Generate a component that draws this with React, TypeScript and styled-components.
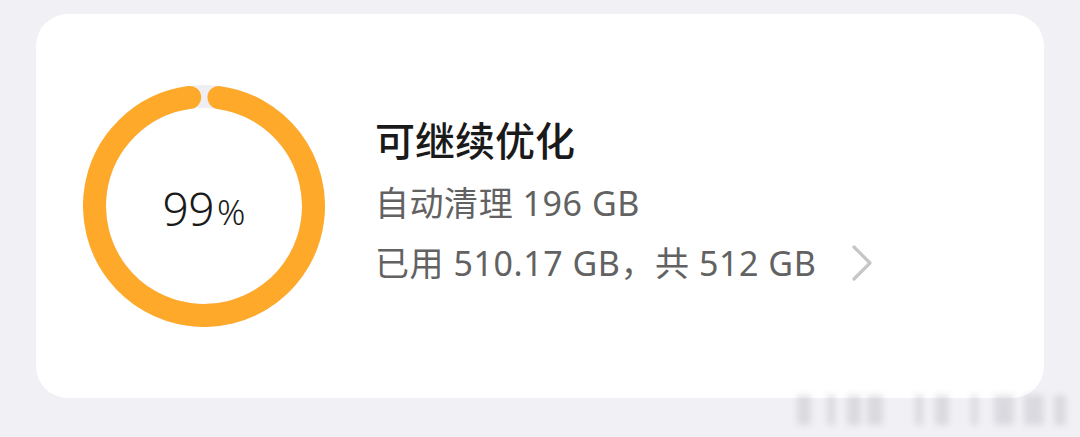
import React from "react";
import styled, { createGlobalStyle } from "styled-components";

const Global = createGlobalStyle`
  html, body {
    margin: 0;
    padding: 0;
    background: #f1f1f5;
  }
  body {
    width: 1080px;
    height: 437px;
    overflow: hidden;
    font-family: "Noto Sans", "Noto Sans CJK SC", sans-serif;
  }
`;

const Page = styled.div`
  position: relative;
  width: 1080px;
  height: 437px;
  padding: 14px 36px 0 36px;
  box-sizing: border-box;
`;

const Card = styled.section`
  height: 384px;
  background: #ffffff;
  border-radius: 32px;
  display: flex;
  align-items: center;
  padding-left: 47px;
  gap: 50px;
`;

const RingWrap = styled.div`
  position: relative;
  width: 242px;
  height: 242px;
  flex: none;
`;

const RingSvg = styled.svg`
  display: block;
`;

const RingLabel = styled.div`
  position: absolute;
  inset: 0;
  display: flex;
  align-items: center;
  justify-content: center;
  padding-top: 4px;
  color: #1a1a1a;
  font-family: "Noto Sans", sans-serif;
`;

const Percent = styled.span`
  font-size: 46px;
  font-weight: 300;
  line-height: 1;
  letter-spacing: -0.5px;
`;

const PercentSign = styled.span`
  font-size: 35px;
  font-weight: 300;
  line-height: 1;
  margin-left: 3px;
  align-self: center;
  padding-top: 7px;
`;

const Info = styled.div`
  display: flex;
  flex-direction: column;
  margin-top: -7px;
`;

const Title = styled.h2`
  margin: 0 0 8px 0;
  font-size: 40px;
  line-height: 52px;
  font-weight: 500;
  color: #1a1a1a;
  font-family: "Noto Sans CJK SC", sans-serif;
`;

const Line = styled.div`
  display: flex;
  align-items: center;
  font-size: 34px;
  line-height: 60px;
  letter-spacing: 0.55px;
  color: #626262;
  font-family: "Noto Sans", "Noto Sans CJK SC", sans-serif;
`;

const Chevron = styled.svg`
  margin-left: 35px;
  flex: none;
`;

const Watermark = styled.div`
  position: absolute;
  right: 14px;
  bottom: 12px;
  display: flex;
  align-items: stretch;
  height: 30px;
  filter: blur(3px);
  opacity: 0.32;
`;

const Bar = styled.span<{ $w: number; $gap: number }>`
  width: ${(p) => p.$w}px;
  margin-left: ${(p) => p.$gap}px;
  background: #a9a9b2;
`;

const bars = [
  { w: 14, gap: 0 },
  { w: 8, gap: 16 },
  { w: 14, gap: 12 },
  { w: 16, gap: 6 },
  { w: 8, gap: 32 },
  { w: 14, gap: 12 },
  { w: 7, gap: 22 },
  { w: 20, gap: 16 },
  { w: 20, gap: 10 },
  { w: 12, gap: 10 },
];

export default function App() {
  const size = 242;
  const c = size / 2;
  const stroke = 23;
  const r = c - stroke / 2;
  const circ = 2 * Math.PI * r;
  const gap = 30;
  const gapDeg = (gap / r) * (180 / Math.PI);
  return (
    <>
      <Global />
      <Page>
        <Card>
          <RingWrap>
            <RingSvg width={size} height={size} viewBox={`0 0 ${size} ${size}`}>
              <circle cx={c} cy={c} r={r} fill="none" stroke="#efeff3" strokeWidth={stroke} />
              <circle
                cx={c}
                cy={c}
                r={r}
                fill="none"
                stroke="#ffa92a"
                strokeWidth={stroke}
                strokeLinecap="round"
                strokeDasharray={`${circ - gap} ${circ}`}
                transform={`rotate(${-90 + gapDeg / 2} ${c} ${c})`}
              />
            </RingSvg>
            <RingLabel>
              <Percent>99</Percent>
              <PercentSign>%</PercentSign>
            </RingLabel>
          </RingWrap>
          <Info>
            <Title>可继续优化</Title>
            <Line>自动清理 196 GB</Line>
            <Line>
              已用 510.17 GB，共 512 GB
              <Chevron width="22" height="40" viewBox="0 0 22 40">
                <path d="M3 4 L19 20 L3 36" fill="none" stroke="#c6c6c6" strokeWidth="3.2" strokeLinecap="round" strokeLinejoin="round" />
              </Chevron>
            </Line>
          </Info>
        </Card>
        <Watermark>
          {bars.map((b, i) => (
            <Bar key={i} $w={b.w} $gap={b.gap} />
          ))}
        </Watermark>
      </Page>
    </>
  );
}
